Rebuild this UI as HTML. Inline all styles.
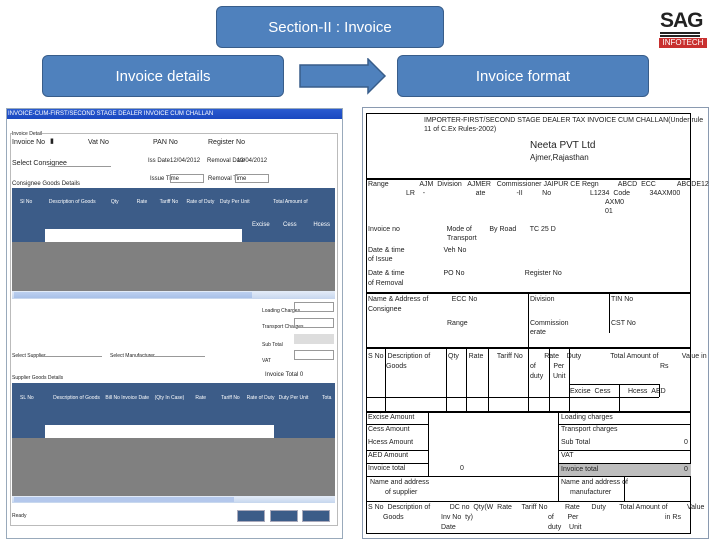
<!DOCTYPE html><html><head><meta charset="utf-8"><style>
*{margin:0;padding:0;box-sizing:border-box}
body{width:720px;height:540px;background:#fff;position:relative;overflow:hidden;font-family:"Liberation Sans",sans-serif}
.a{position:absolute}
.btn{position:absolute;background:#4f81bd;border:1.5px solid #385d8a;border-radius:6px;color:#fff;font-size:15px;display:flex;align-items:center;justify-content:center}
.t{position:absolute;font-size:7px;color:#222;white-space:nowrap;line-height:8px}
.hl{position:absolute;background:#000;height:1px}
.vl{position:absolute;background:#000;width:1px}
.w{color:#fff}
</style></head><body>
<div class="btn" style="left:216px;top:6px;width:228px;height:42px">Section-II : Invoice</div>
<div class="btn" style="left:42px;top:55px;width:242px;height:42px">Invoice details</div>
<div class="btn" style="left:397px;top:55px;width:252px;height:42px">Invoice format</div>
<svg class="a" style="left:298px;top:58px" width="90" height="38"><polygon points="2,7 70,7 70,1 87,18 70,35 70,29 2,29" fill="#4f81bd" stroke="#385d8a" stroke-width="1.5"/></svg>
<div class="a" style="left:660px;top:9px;font:bold 21px 'Liberation Sans';letter-spacing:-1px;color:#222">SAG</div>
<div class="a" style="left:660px;top:32px;width:40px;height:1.5px;background:#222"></div>
<div class="a" style="left:660px;top:35px;width:40px;height:1.5px;background:#222"></div>
<div class="a" style="left:659px;top:38px;width:48px;height:10px;background:#c8302f;color:#fff;font-size:8px;line-height:10px;text-align:center">INFOTECH</div>

<div class="a" style="left:6px;top:108px;width:337px;height:431px;border:1px solid #9ab;background:#fff"></div>
<div class="a" style="left:7px;top:109px;width:335px;height:10px;background:linear-gradient(#2a5bd0,#1a48c0)"></div>
<div class="t w" style="left:8px;top:110px;font-size:6px">INVOICE-CUM-FIRST/SECOND STAGE DEALER INVOICE CUM CHALLAN</div>
<div class="a" style="left:10px;top:133px;width:328px;height:393px;border:1px solid #bbb"></div>
<div class="t" style="left:12px;top:130px;font-size:5px;background:#fff">Invoice Detail</div>
<div class="t" style="left:12px;top:139px">Invoice No</div><div class="t" style="left:50px;top:138px">▮</div>
<div class="t" style="left:88px;top:139px">Vat No</div>
<div class="t" style="left:153px;top:139px">PAN No</div>
<div class="t" style="left:208px;top:139px">Register No</div>
<div class="t" style="left:12px;top:160px">Select Consignee</div>
<div class="a" style="left:48px;top:157px;width:63px;height:10px;border-bottom:1px solid #999"></div>
<div class="t" style="left:148px;top:157px;font-size:6px">Iss Date</div><div class="t" style="left:170px;top:157px;font-size:6px">12/04/2012</div>
<div class="t" style="left:207px;top:157px;font-size:6px">Removal Date</div><div class="t" style="left:237px;top:157px;font-size:6px">12/04/2012</div>
<div class="t" style="left:150px;top:175px;font-size:6px">Issue Time</div>
<div class="a" style="left:170px;top:174px;width:34px;height:9px;border:1px solid #999"></div>
<div class="t" style="left:208px;top:175px;font-size:6px">Removal Time</div>
<div class="a" style="left:235px;top:174px;width:34px;height:9px;border:1px solid #999"></div>
<div class="t" style="left:12px;top:180px;font-size:6px">Consignee Goods Details</div>
<div class="a" style="left:12px;top:188px;width:323px;height:41px;background:#3c5c88"></div>
<div class="t w" style="left:20px;top:198px;font-size:5px">Sl No &nbsp;&nbsp;&nbsp;&nbsp;&nbsp;&nbsp;&nbsp;&nbsp;&nbsp;&nbsp; Description of Goods &nbsp;&nbsp;&nbsp;&nbsp;&nbsp;&nbsp;&nbsp;&nbsp;&nbsp; Qty &nbsp;&nbsp;&nbsp;&nbsp;&nbsp;&nbsp;&nbsp;&nbsp;&nbsp;&nbsp;&nbsp; Rate &nbsp;&nbsp;&nbsp;&nbsp;&nbsp;&nbsp;&nbsp; Tariff No &nbsp;&nbsp;&nbsp;&nbsp; Rate of Duty &nbsp;&nbsp; Duty Per Unit &nbsp;&nbsp;&nbsp;&nbsp;&nbsp;&nbsp;&nbsp;&nbsp;&nbsp;&nbsp;&nbsp;&nbsp;&nbsp;&nbsp;&nbsp; Total Amount of</div>
<div class="t w" style="left:252px;top:221px;font-size:6px">Excise &nbsp;&nbsp;&nbsp;&nbsp;&nbsp;&nbsp; Cess &nbsp;&nbsp;&nbsp;&nbsp;&nbsp;&nbsp;&nbsp;&nbsp; Hcess</div>
<div class="a" style="left:45px;top:229px;width:197px;height:13px;background:#fff"></div>
<div class="a" style="left:12px;top:229px;width:33px;height:13px;background:#3c5c88"></div>
<div class="a" style="left:242px;top:229px;width:93px;height:13px;background:#3c5c88"></div>
<div class="a" style="left:12px;top:242px;width:323px;height:49px;background:#808080"></div>
<div class="a" style="left:12px;top:291px;width:323px;height:8px;background:linear-gradient(#e4ecf8,#c6d6ee)"></div>
<div class="a" style="left:14px;top:292px;width:238px;height:6px;background:linear-gradient(#bcd0f0,#a8c0e8)"></div>
<div class="t" style="left:262px;top:307px;font-size:5px">Loading Charges</div><div class="a" style="left:294px;top:302px;width:40px;height:10px;border:1px solid #999"></div>
<div class="t" style="left:262px;top:323px;font-size:5px">Transport Charges</div><div class="a" style="left:294px;top:318px;width:40px;height:10px;border:1px solid #999"></div>
<div class="t" style="left:262px;top:341px;font-size:5px">Sub Total</div><div class="a" style="left:294px;top:334px;width:40px;height:10px;background:#ddd"></div>
<div class="t" style="left:262px;top:357px;font-size:5px">VAT</div><div class="a" style="left:294px;top:350px;width:40px;height:10px;border:1px solid #999"></div>
<div class="t" style="left:12px;top:352px;font-size:5px">Select Supplier</div><div class="a" style="left:40px;top:347px;width:62px;height:10px;border-bottom:1px solid #999"></div>
<div class="t" style="left:110px;top:352px;font-size:5px">Select Manufacturer</div><div class="a" style="left:143px;top:347px;width:62px;height:10px;border-bottom:1px solid #999"></div>
<div class="t" style="left:12px;top:374px;font-size:5px">Supplier Goods Details</div>
<div class="t" style="left:265px;top:371px;font-size:6px">Invoice Total 0</div>
<div class="a" style="left:12px;top:383px;width:323px;height:42px;background:#3c5c88"></div>
<div class="t w" style="left:20px;top:394px;font-size:5px">SL No &nbsp;&nbsp;&nbsp;&nbsp;&nbsp;&nbsp;&nbsp;&nbsp;&nbsp;&nbsp;&nbsp;&nbsp; Description of Goods &nbsp;&nbsp; Bill No Invoice Date &nbsp;&nbsp; (Qty In Case) &nbsp;&nbsp;&nbsp;&nbsp;&nbsp;&nbsp; Rate &nbsp;&nbsp;&nbsp;&nbsp;&nbsp;&nbsp;&nbsp;&nbsp;&nbsp; Tariff No &nbsp;&nbsp;&nbsp; Rate of Duty &nbsp; Duty Per Unit</div>
<div class="t w" style="left:322px;top:394px;font-size:5px">Tota</div>
<div class="a" style="left:45px;top:425px;width:229px;height:13px;background:#fff"></div>
<div class="a" style="left:12px;top:425px;width:33px;height:13px;background:#3c5c88"></div>
<div class="a" style="left:274px;top:425px;width:61px;height:13px;background:#3c5c88"></div>
<div class="a" style="left:12px;top:438px;width:323px;height:58px;background:#808080"></div>
<div class="a" style="left:12px;top:496px;width:323px;height:7px;background:linear-gradient(#e4ecf8,#c6d6ee)"></div>
<div class="a" style="left:14px;top:497px;width:220px;height:5px;background:#b4c8ec"></div>
<div class="t" style="left:12px;top:512px;font-size:5px">Ready</div>
<div class="a" style="left:237px;top:510px;width:28px;height:12px;background:#3c5c88;border:1px solid #aab"></div>
<div class="a" style="left:270px;top:510px;width:28px;height:12px;background:#3c5c88;border:1px solid #aab"></div>
<div class="a" style="left:302px;top:510px;width:28px;height:12px;background:#3c5c88;border:1px solid #aab"></div>

<div class="a" style="left:362px;top:107px;width:347px;height:432px;border:1px solid #8a9ab0"></div>
<div class="a" style="left:366px;top:113px;width:325px;height:421px;border:1px solid #000"></div>
<div class="t" style="left:424px;top:117px;font-size:7px">IMPORTER-FIRST/SECOND STAGE DEALER TAX INVOICE CUM CHALLAN(Under rule</div>
<div class="t" style="left:424px;top:126px;font-size:7px">11 of C.Ex Rules-2002)</div>
<div class="t" style="left:530px;top:140px;font-size:10px;line-height:11px">Neeta PVT Ltd</div>
<div class="t" style="left:530px;top:154px;font-size:8px">Ajmer,Rajasthan</div>
<div class="hl" style="left:366px;top:178px;width:325px;height:2px"></div>
<div class="t" style="left:368px;top:181px">Range &nbsp;&nbsp;&nbsp;&nbsp;&nbsp;&nbsp;&nbsp;&nbsp;&nbsp;&nbsp;&nbsp;&nbsp;&nbsp;&nbsp; AJM &nbsp;Division &nbsp; AJMER &nbsp; Commissioner JAIPUR CE Regn &nbsp;&nbsp;&nbsp;&nbsp;&nbsp;&nbsp;&nbsp;&nbsp; ABCD &nbsp;ECC &nbsp;&nbsp;&nbsp;&nbsp;&nbsp;&nbsp;&nbsp;&nbsp;&nbsp; ABCDE12</div>
<div class="t" style="left:406px;top:190px">LR &nbsp;&nbsp; - &nbsp;&nbsp;&nbsp;&nbsp;&nbsp;&nbsp;&nbsp;&nbsp;&nbsp;&nbsp;&nbsp;&nbsp;&nbsp;&nbsp;&nbsp;&nbsp;&nbsp;&nbsp;&nbsp;&nbsp;&nbsp;&nbsp;&nbsp;&nbsp; ate &nbsp;&nbsp;&nbsp;&nbsp;&nbsp;&nbsp;&nbsp;&nbsp;&nbsp;&nbsp;&nbsp;&nbsp;&nbsp;&nbsp; -II &nbsp;&nbsp;&nbsp;&nbsp;&nbsp;&nbsp;&nbsp;&nbsp; No &nbsp;&nbsp;&nbsp;&nbsp;&nbsp;&nbsp;&nbsp;&nbsp;&nbsp;&nbsp;&nbsp;&nbsp;&nbsp;&nbsp;&nbsp;&nbsp;&nbsp;&nbsp; L1234 &nbsp;Code &nbsp;&nbsp;&nbsp;&nbsp;&nbsp;&nbsp;&nbsp;&nbsp; 34AXM00</div>
<div class="t" style="left:605px;top:199px">AXM0</div><div class="t" style="left:605px;top:208px">01</div>
<div class="t" style="left:368px;top:226px">Invoice no &nbsp;&nbsp;&nbsp;&nbsp;&nbsp;&nbsp;&nbsp;&nbsp;&nbsp;&nbsp;&nbsp;&nbsp;&nbsp;&nbsp;&nbsp;&nbsp;&nbsp;&nbsp;&nbsp;&nbsp;&nbsp;&nbsp; Mode of &nbsp;&nbsp;&nbsp;&nbsp;&nbsp;&nbsp;&nbsp; By Road &nbsp;&nbsp;&nbsp;&nbsp;&nbsp; TC 25 D</div>
<div class="t" style="left:447px;top:235px">Transport</div>
<div class="t" style="left:368px;top:247px">Date &amp; time &nbsp;&nbsp;&nbsp;&nbsp;&nbsp;&nbsp;&nbsp;&nbsp;&nbsp;&nbsp;&nbsp;&nbsp;&nbsp;&nbsp;&nbsp;&nbsp;&nbsp;&nbsp; Veh No</div>
<div class="t" style="left:368px;top:256px">of Issue</div>
<div class="t" style="left:368px;top:270px">Date &amp; time &nbsp;&nbsp;&nbsp;&nbsp;&nbsp;&nbsp;&nbsp;&nbsp;&nbsp;&nbsp;&nbsp;&nbsp;&nbsp;&nbsp;&nbsp;&nbsp;&nbsp;&nbsp; PO No &nbsp;&nbsp;&nbsp;&nbsp;&nbsp;&nbsp;&nbsp;&nbsp;&nbsp;&nbsp;&nbsp;&nbsp;&nbsp;&nbsp;&nbsp;&nbsp;&nbsp;&nbsp;&nbsp;&nbsp;&nbsp;&nbsp;&nbsp;&nbsp;&nbsp;&nbsp;&nbsp;&nbsp;&nbsp; Register No</div>
<div class="t" style="left:368px;top:280px">of Removal</div>
<div class="hl" style="left:366px;top:292px;width:325px;height:2px"></div>
<div class="t" style="left:368px;top:296px">Name &amp; Address of &nbsp;&nbsp;&nbsp;&nbsp;&nbsp;&nbsp;&nbsp;&nbsp;&nbsp;&nbsp; ECC No</div>
<div class="t" style="left:368px;top:306px">Consignee</div>
<div class="t" style="left:447px;top:320px">Range</div>
<div class="vl" style="left:528px;top:293px;height:54px"></div>
<div class="t" style="left:530px;top:296px">Division</div>
<div class="t" style="left:530px;top:320px">Commission</div><div class="t" style="left:530px;top:329px">erate</div>
<div class="vl" style="left:609px;top:293px;height:40px"></div>
<div class="t" style="left:611px;top:296px">TIN No</div><div class="t" style="left:611px;top:320px">CST No</div>
<div class="hl" style="left:366px;top:347px;width:325px;height:1.5px"></div>
<div class="t" style="left:368px;top:353px">S No &nbsp;Description of</div><div class="t" style="left:386px;top:363px">Goods</div>
<div class="t" style="left:448px;top:353px">Qty &nbsp;&nbsp;&nbsp; Rate &nbsp;&nbsp;&nbsp;&nbsp;&nbsp; Tariff No &nbsp;&nbsp;&nbsp;&nbsp;&nbsp;&nbsp;&nbsp;&nbsp;&nbsp; Rate &nbsp;&nbsp; Duty &nbsp;&nbsp;&nbsp;&nbsp;&nbsp;&nbsp;&nbsp;&nbsp;&nbsp;&nbsp;&nbsp;&nbsp;&nbsp; Total Amount of &nbsp;&nbsp;&nbsp;&nbsp;&nbsp;&nbsp;&nbsp;&nbsp;&nbsp;&nbsp; Value in</div>
<div class="t" style="left:530px;top:363px">of &nbsp;&nbsp;&nbsp;&nbsp;&nbsp;&nbsp;&nbsp; Per</div><div class="t" style="left:660px;top:363px">Rs</div>
<div class="t" style="left:530px;top:373px">duty &nbsp;&nbsp;&nbsp; Unit</div>
<div class="t" style="left:570px;top:388px">Excise &nbsp;Cess &nbsp;&nbsp;&nbsp;&nbsp;&nbsp;&nbsp;&nbsp; Hcess &nbsp;AED</div>
<div class="vl" style="left:385px;top:347px;height:64px"></div>
<div class="vl" style="left:446px;top:347px;height:64px"></div>
<div class="vl" style="left:466px;top:347px;height:64px"></div>
<div class="vl" style="left:488px;top:347px;height:64px"></div>
<div class="vl" style="left:528px;top:347px;height:64px"></div>
<div class="vl" style="left:549px;top:347px;height:64px"></div>
<div class="vl" style="left:569px;top:347px;height:64px"></div>
<div class="vl" style="left:619px;top:384px;height:27px"></div>
<div class="vl" style="left:659px;top:384px;height:13px"></div>
<div class="hl" style="left:569px;top:384px;width:90px"></div>
<div class="hl" style="left:366px;top:397px;width:293px"></div>
<div class="hl" style="left:366px;top:411px;width:325px;height:1.5px"></div>
<div class="t" style="left:368px;top:414px">Excise Amount</div>
<div class="t" style="left:368px;top:426px">Cess Amount</div>
<div class="t" style="left:368px;top:439px">Hcess Amount</div>
<div class="t" style="left:368px;top:452px">AED Amount</div>
<div class="t" style="left:368px;top:465px">Invoice total</div>
<div class="t" style="left:460px;top:465px">0</div>
<div class="vl" style="left:428px;top:411px;height:66px"></div>
<div class="hl" style="left:366px;top:424px;width:62px"></div>
<div class="hl" style="left:366px;top:450px;width:62px"></div>
<div class="hl" style="left:366px;top:463px;width:62px"></div>
<div class="hl" style="left:366px;top:476px;width:325px"></div>
<div class="vl" style="left:558px;top:411px;height:90px"></div>
<div class="t" style="left:561px;top:414px">Loading charges</div>
<div class="t" style="left:561px;top:426px">Transport charges</div>
<div class="t" style="left:561px;top:439px">Sub Total</div><div class="t" style="left:684px;top:439px">0</div>
<div class="t" style="left:561px;top:452px">VAT</div>
<div class="hl" style="left:558px;top:424px;width:133px"></div>
<div class="hl" style="left:558px;top:450px;width:133px"></div>
<div class="a" style="left:559px;top:463px;width:132px;height:13px;background:#bdbdbd;border-top:1px solid #000"></div>
<div class="t" style="left:561px;top:466px">Invoice total</div><div class="t" style="left:684px;top:466px">0</div>
<div class="t" style="left:370px;top:479px">Name and address</div><div class="t" style="left:385px;top:489px">of supplier</div>
<div class="t" style="left:561px;top:479px">Name and address of</div><div class="t" style="left:570px;top:489px">manufacturer</div>
<div class="vl" style="left:624px;top:476px;height:25px"></div>
<div class="hl" style="left:366px;top:501px;width:325px"></div>
<div class="t" style="left:368px;top:504px">S No &nbsp;Description of &nbsp;&nbsp;&nbsp;&nbsp;&nbsp;&nbsp;&nbsp;&nbsp; DC no &nbsp;Qty(W &nbsp;Rate &nbsp;&nbsp;&nbsp; Tariff No &nbsp;&nbsp;&nbsp;&nbsp;&nbsp;&nbsp;&nbsp; Rate &nbsp;&nbsp;&nbsp;&nbsp; Duty &nbsp;&nbsp;&nbsp;&nbsp;&nbsp; Total Amount of &nbsp;&nbsp;&nbsp;&nbsp;&nbsp;&nbsp;&nbsp;&nbsp; Value</div>
<div class="t" style="left:383px;top:514px">Goods</div>
<div class="t" style="left:441px;top:514px">Inv No &nbsp;ty)</div><div class="t" style="left:441px;top:524px">Date</div>
<div class="t" style="left:548px;top:514px">of &nbsp;&nbsp;&nbsp;&nbsp;&nbsp; Per</div><div class="t" style="left:548px;top:524px">duty &nbsp;&nbsp; Unit</div>
<div class="t" style="left:665px;top:514px">in Rs</div>
</body></html>
